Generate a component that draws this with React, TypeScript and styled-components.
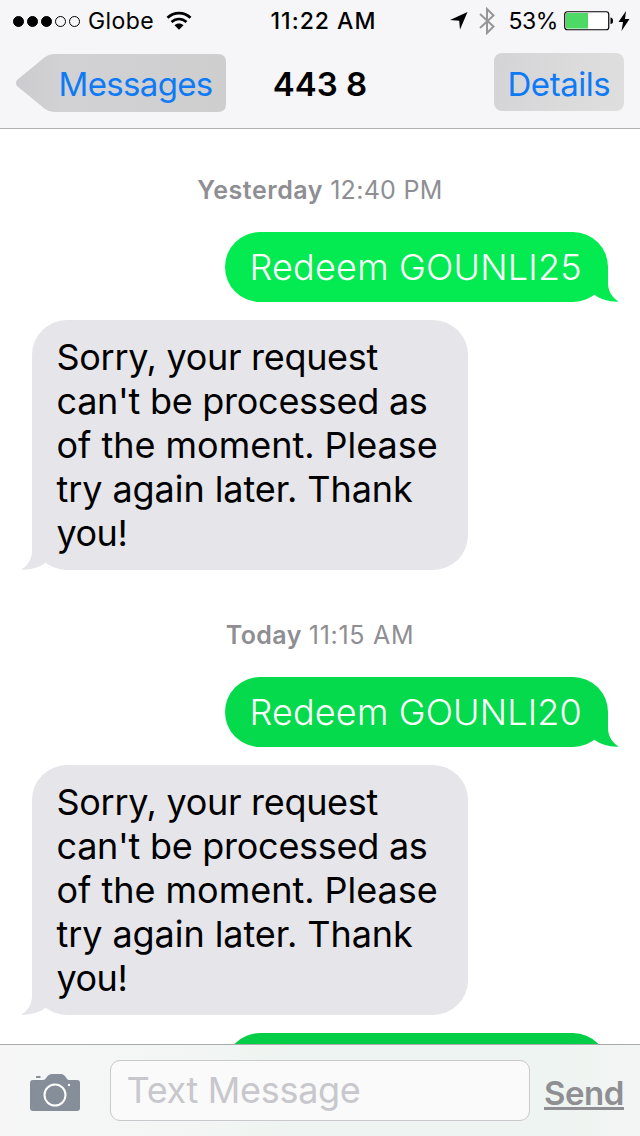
import React from 'react';
import styled, { createGlobalStyle } from 'styled-components';

const GlobalStyle = createGlobalStyle`
  * { box-sizing: border-box; }
  body { margin: 0; background: #fff; font-family: Inter, "Liberation Sans", sans-serif; }
`;

const Screen = styled.div`
  width: 640px;
  height: 1136px;
  display: flex;
  flex-direction: column;
  overflow: hidden;
  background: #fff;
`;

const Header = styled.header`
  height: 129px;
  flex: none;
  background: #f6f6f8;
  border-bottom: 1px solid #b0b0b2;
`;

const StatusBar = styled.div`
  height: 42px;
  display: grid;
  grid-template-columns: 270px 1fr 263px;
  align-items: center;
  font-size: 23px;
  line-height: 42px;
  color: #000;
`;

const StatusLeft = styled.div`
  display: flex;
  align-items: center;
  padding-left: 13px;
`;

const StatusRight = styled.div`
  display: flex;
  align-items: center;
  justify-content: flex-end;
  padding-right: 10px;
`;

const Dots = styled.div`
  display: flex;
  gap: 3px;
  margin-right: 8px;
`;

const Dot = styled.span<{ $filled: boolean }>`
  width: 11px;
  height: 11px;
  border-radius: 50%;
  border: 1px solid #000;
  background: ${(p) => (p.$filled ? '#000' : 'transparent')};
`;

const Label = styled.span<{ $spacing?: number; $weight?: number }>`
  white-space: nowrap;
  font-weight: ${(p) => p.$weight ?? 400};
  letter-spacing: ${(p) => p.$spacing ?? 0}px;
`;

const Clock = styled(Label)`
  text-align: center;
`;

const WifiIcon = styled.svg`
  margin-left: 12px;
`;

const BluetoothIcon = styled.svg`
  margin: 0 13px 0 11px;
`;

const BatteryIcon = styled.svg`
  margin-left: 6px;
`;

const BoltIcon = styled.svg`
  margin-left: 4px;
`;

const NavBar = styled.nav`
  display: grid;
  grid-template-columns: 210px 1fr 130px;
  padding: 11px 16px 0;
`;

const BackButton = styled.button`
  position: relative;
  height: 58px;
  margin-top: 1px;
  padding: 0 0 0 42.5px;
  border: 0;
  background: none;
  text-align: left;
  font: 400 33px/60px Inter, sans-serif;
  color: #0f7af5;
`;

const BackShape = styled.svg`
  position: absolute;
  left: 0;
  top: 0;
`;

const BackLabel = styled(Label)`
  position: relative;
`;

const Title = styled.h1`
  margin: 0;
  padding-right: 80px;
  font-size: 33px;
  line-height: 63px;
  font-weight: 600;
  text-align: center;
  white-space: nowrap;
`;

const DetailsButton = styled.button`
  height: 58px;
  padding: 0 0 0 13.5px;
  border: 0;
  border-radius: 8px;
  background: linear-gradient(100deg, #d4d4d6, #dbdbdc 60%, #dededf);
  text-align: left;
  font: 400 33px/62px Inter, sans-serif;
  color: #0f7af5;
`;

const Thread = styled.main`
  flex: 1;
  min-height: 0;
  overflow: hidden;
  display: flex;
  flex-direction: column;
  padding: 44px 32px 0;
`;

const Stamp = styled.div<{ $later?: boolean }>`
  height: 34px;
  margin: ${(p) => (p.$later ? '48px' : '0')} 0 25px;
  line-height: 35px;
  font-size: 25px;
  text-align: center;
  color: #8e8e93;
  white-space: nowrap;
`;

const Sent = styled.div<{ $color: string }>`
  position: relative;
  align-self: flex-end;
  width: 383px;
  height: 70px;
  flex: none;
  margin-bottom: 18px;
  padding: 13px 0 13px 24.5px;
  border-radius: 35px;
  background: ${(p) => p.$color};
  color: #fff;
  font-size: 36px;
  line-height: 44px;
`;

const Received = styled.div`
  position: relative;
  width: 436px;
  height: 250px;
  flex: none;
  padding: 15px 0 15px 24.5px;
  border-radius: 35px;
  background: #e5e5ea;
  color: #000;
  font-size: 36px;
  line-height: 44px;
`;

const NextSent = styled(Sent)`
  margin-top: 18px;
`;

const Line = styled(Label)`
  display: block;
`;

const Tail = styled.svg<{ $side: 'left' | 'right' }>`
  position: absolute;
  bottom: 0;
  ${(p) => p.$side}: -11px;
`;

const Composer = styled.footer`
  height: 92px;
  flex: none;
  display: flex;
  align-items: flex-start;
  border-top: 1px solid #a9abaa;
  background: linear-gradient(90deg, #f6f6f7 0, #f4f6f5 25%, #eef4f1 45%, #eef4f1 88%, #f3f5f4 100%);
`;

const Camera = styled.svg`
  margin: 29px 0 0 30px;
  flex: none;
`;

const Field = styled.div`
  width: 420px;
  height: 61px;
  margin: 15px 0 0 30px;
  padding-left: 15.5px;
  border: 1px solid #c8c8cd;
  border-radius: 10px;
  background: #fafafa;
  color: #c7c7cc;
  font-size: 36px;
  line-height: 59px;
`;

const SendButton = styled.div`
  width: 80px;
  height: 43px;
  margin: 22px 0 0 14px;
  border-bottom: 3px solid #8e8e93;
  color: #8e8e93;
  font-size: 33px;
  line-height: 52px;
`;

const TailShape = ({ side, color }: { side: 'left' | 'right'; color: string }) => (
  <Tail $side={side} width="46" height="36" viewBox="0 0 46 36">
    <g transform={side === 'left' ? 'translate(46 0) scale(-1 1)' : undefined}>
      <path d="M35 0V18C35.500 26 39.500 32 46 35.600C36 36 27.500 33.500 21.500 28.800L12 24L18 0Z" fill={color} />
    </g>
  </Tail>
);

const replyLines: Array<[string, number]> = [
  ['Sorry, your request', -0.3],
  ["can't be processed as", -0.27],
  ['of the moment. Please', -0.02],
  ['try again later. Thank', -0.07],
  ['you!', -0.5],
];

const Reply = () => (
  <Received>
    <TailShape side="left" color="#e5e5ea" />
    {replyLines.map(([text, spacing]) => (
      <Line key={text} $spacing={spacing}>{text}</Line>
    ))}
  </Received>
);

export default function App() {
  return (
    <Screen>
      <GlobalStyle />
      <Header>
        <StatusBar>
          <StatusLeft>
            <Dots>
              {[true, true, true, false, false].map((filled, i) => (
                <Dot key={i} $filled={filled} />
              ))}
            </Dots>
            <Label $spacing={0.4}>Globe</Label>
            <WifiIcon width="26" height="20" viewBox="0 0 26 20">
              <g fill="none" stroke="#000" strokeWidth="2.7">
                <path d="M1.500 6.700C8 .5 18 .5 24.500 6.700" />
                <path d="M5.500 11C10 7 16 7 20.500 11" />
              </g>
              <path d="M8.500 14.200C11 12 15 12 17.500 14.200L13 18.800Z" />
            </WifiIcon>
          </StatusLeft>
          <Clock $weight={500} $spacing={1}>11:22 AM</Clock>
          <StatusRight>
            <svg width="18" height="18" viewBox="0 0 18 18">
              <path d="M0 8L17.500 0L10 17.500L9.200 8.800Z" />
            </svg>
            <BluetoothIcon width="16" height="28" viewBox="0 0 16 28">
              <path d="M1 7L14.500 19.500L8 26V2L14.500 8.500L1 21" fill="none" stroke="#96969a" strokeWidth="2" />
            </BluetoothIcon>
            <Label $spacing={-0.4}>53%</Label>
            <BatteryIcon width="50" height="20" viewBox="0 0 50 20">
              <rect x=".75" y=".75" width="44" height="18" rx="2.500" fill="#fff" stroke="#000" strokeWidth="1.200" />
              <rect x="2" y="2" width="22" height="15.500" fill="#4cd964" />
              <path d="M46.500 6.500Q49 6.500 49 10Q49 13 46.500 13Z" />
            </BatteryIcon>
            <BoltIcon width="12" height="20" viewBox="0 0 12 20">
              <path d="M8 0L0.500 11H5L3.500 20L11.500 8H7Z" />
            </BoltIcon>
          </StatusRight>
        </StatusBar>
        <NavBar>
          <BackButton>
            <BackShape width="210" height="58" viewBox="0 0 210 58">
              <defs>
                <linearGradient id="back" x1="0" x2="1">
                  <stop offset="0" stopColor="#ccccd0" />
                  <stop offset=".25" stopColor="#d2d2d4" />
                  <stop offset="1" stopColor="#cececf" />
                </linearGradient>
              </defs>
              <path d="M1 26L29 3Q33 0 38 0H202Q210 0 210 8V50Q210 58 202 58H38Q33 58 29 55L1 32Q-1 29 1 26Z" fill="url(#back)" />
            </BackShape>
            <BackLabel $spacing={-0.65}>Messages</BackLabel>
          </BackButton>
          <Title>443 8</Title>
          <DetailsButton><Label $spacing={-0.45}>Details</Label></DetailsButton>
        </NavBar>
      </Header>
      <Thread>
        <Stamp>
          <Label $weight={600} $spacing={0.55}>Yesterday</Label> <Label $spacing={0.3}>12:40 PM</Label>
        </Stamp>
        <Sent $color="#04ea51">
          <TailShape side="right" color="#04ea51" />
          <Label $weight={350} $spacing={0.2}>Redeem GOUNLI25</Label>
        </Sent>
        <Reply />
        <Stamp $later>
          <Label $weight={600} $spacing={0.4}>Today</Label> <Label $spacing={0.7}>11:15 AM</Label>
        </Stamp>
        <Sent $color="#04da4b">
          <TailShape side="right" color="#04da4b" />
          <Label $weight={350} $spacing={0.15}>Redeem GOUNLI20</Label>
        </Sent>
        <Reply />
        <NextSent $color="#04cd48" />
      </Thread>
      <Composer>
        <Camera width="50" height="37" viewBox="0 0 50 37">
          <path d="M3 6H13Q15 6 16.500 3.500Q18.500 0 22 0H31Q34 0 36 3.500Q37.300 6 39 6H47Q50 6 50 9V34Q50 37 47 37H3Q0 37 0 34V9Q0 6 3 6Z" fill="#868e99" />
          <rect x="6" y="2" width="4.500" height="2" rx=".5" fill="#868e99" />
          <circle cx="25" cy="21" r="10.500" fill="none" stroke="#fff" strokeWidth="2" />
          <circle cx="39" cy="11" r="1.200" fill="#fff" />
        </Camera>
        <Field><Label $spacing={-0.3}>Text Message</Label></Field>
        <SendButton><Label $weight={600} $spacing={-0.5}>Send</Label></SendButton>
      </Composer>
    </Screen>
  );
}
